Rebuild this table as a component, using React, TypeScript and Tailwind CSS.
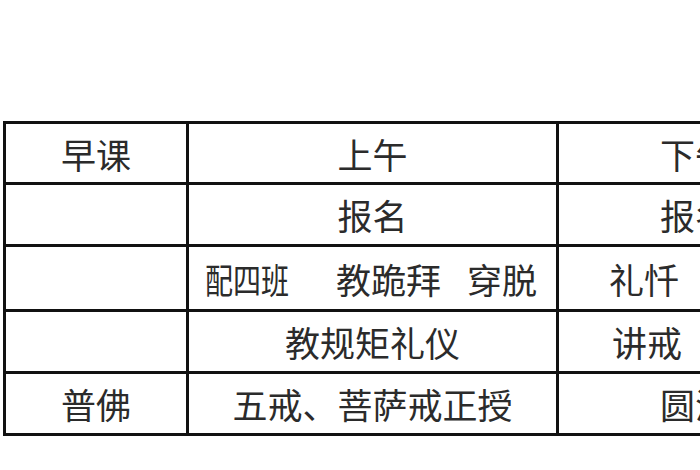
import React from "react";

const font = { fontFamily: '"Noto Sans CJK SC", "Noto Sans", sans-serif' };

function Cell({ children, className = "" }: { children?: React.ReactNode; className?: string }) {
  return (
    <div className={`bg-white flex items-center text-[35px] leading-none text-[#2b2b2b] whitespace-nowrap overflow-hidden ${className}`}>
      {children}
    </div>
  );
}

export default function App() {
  return (
    <div className="w-[700px] h-[470px] overflow-hidden bg-white" style={font}>
      <div className="pt-[121px] pl-[3px]">
        <div className="grid grid-cols-[180px_367px_272px] grid-rows-[58px_59px_62px_59px_59px] gap-[3px] p-[3px] bg-[#111] w-max">
          <Cell className="justify-center">早课</Cell>
          <Cell className="justify-center">上午</Cell>
          <Cell className="justify-center">下午</Cell>

          <Cell />
          <Cell className="justify-center">报名</Cell>
          <Cell className="justify-center">报名</Cell>

          <Cell />
          <Cell className="justify-start pl-[16px]">
            <span className="inline-block w-[84px] overflow-visible">
              <span className="inline-block origin-left scale-x-[0.8]">配四班</span>
            </span>
            <span className="ml-[47px]">教跪拜</span>
            <span className="ml-[26px]">穿脱</span>
          </Cell>
          <Cell className="justify-start pl-[50px]">
            <span>礼忏</span>
            <span className="ml-[40px]">诵戒</span>
          </Cell>

          <Cell />
          <Cell className="justify-center">教规矩礼仪</Cell>
          <Cell className="justify-start pl-[53px]">
            <span>讲戒</span>
            <span className="ml-[40px]">问答</span>
          </Cell>

          <Cell className="justify-center">普佛</Cell>
          <Cell className="justify-center">五戒、菩萨戒正授</Cell>
          <Cell className="justify-center">圆满</Cell>
        </div>
      </div>
    </div>
  );
}
